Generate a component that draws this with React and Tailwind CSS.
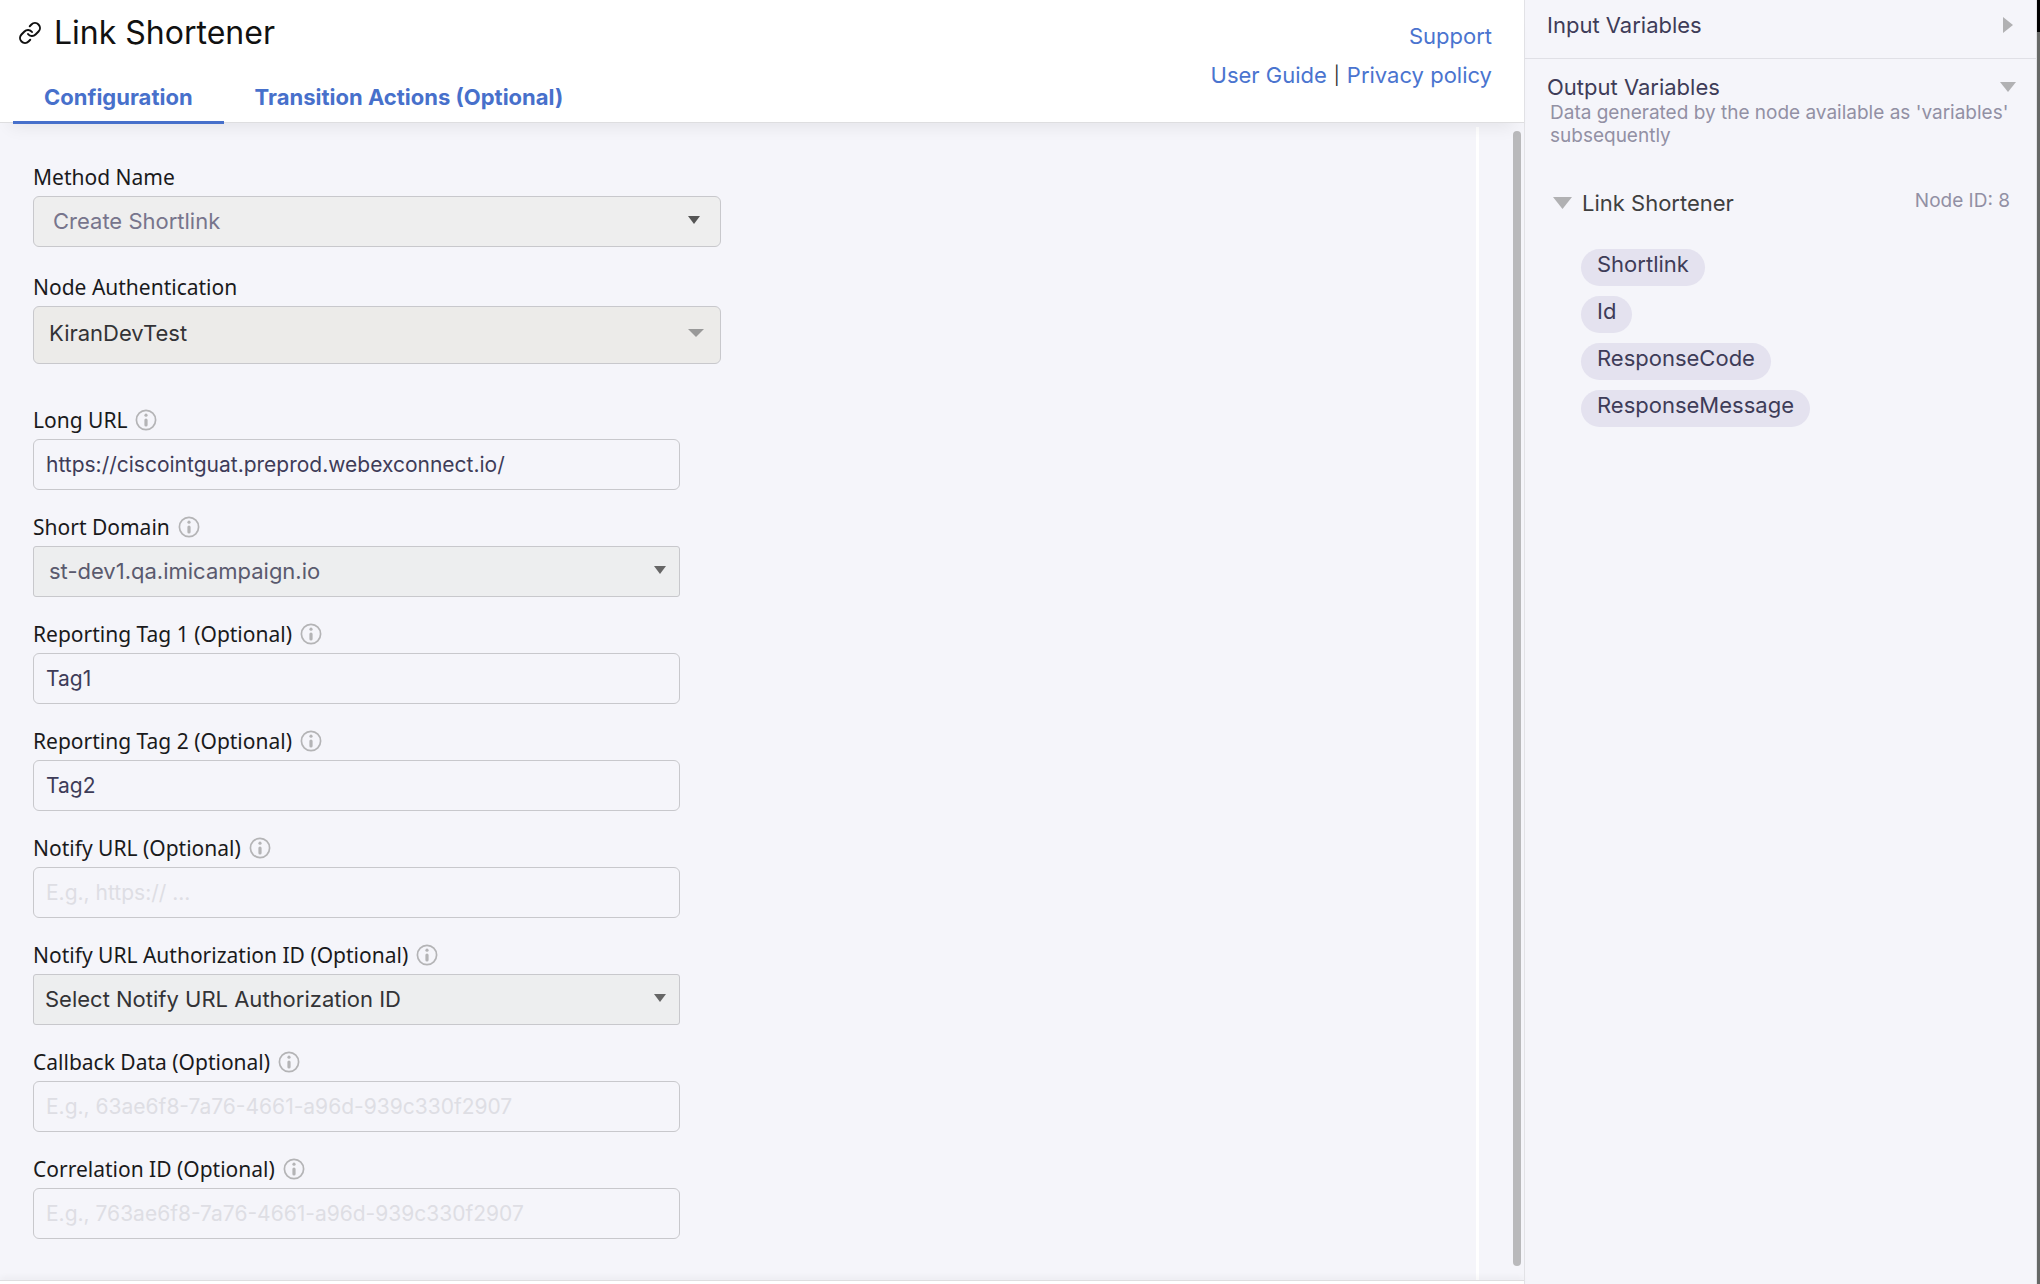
import { useState } from "react";
import { Link } from "lucide-react";

const fields = [
  { id: "longUrl", label: "Long URL", type: "text", value: "https://ciscointguat.preprod.webexconnect.io/" },
  { id: "shortDomain", label: "Short Domain", type: "select", value: "st-dev1.qa.imicampaign.io", style: "pl-[15px] text-[#5a5a6e]" },
  { id: "tag1", label: "Reporting Tag 1 (Optional)", type: "text", value: "Tag1" },
  { id: "tag2", label: "Reporting Tag 2 (Optional)", type: "text", value: "Tag2" },
  { id: "notifyUrl", label: "Notify URL (Optional)", type: "text", value: "", placeholder: "E.g., https:// ..." },
  { id: "notifyAuth", label: "Notify URL Authorization ID (Optional)", type: "select", value: "Select Notify URL Authorization ID", style: "pl-[11px] text-[#333336]" },
  { id: "callback", label: "Callback Data (Optional)", type: "text", value: "", placeholder: "E.g., 63ae6f8-7a76-4661-a96d-939c330f2907" },
  { id: "correlation", label: "Correlation ID (Optional)", type: "text", value: "", placeholder: "E.g., 763ae6f8-7a76-4661-a96d-939c330f2907" },
];

const outputs = ["Shortlink", "Id", "ResponseCode", "ResponseMessage"];

function InfoIcon() {
  return (
    <svg className="size-[22px] shrink-0" viewBox="0 0 22 22" fill="none" aria-hidden>
      <circle cx="11" cy="11" r="9.6" stroke="#b4b4b6" strokeWidth="1.7" />
      <circle cx="11" cy="6.2" r="1.6" fill="#b4b4b6" />
      <path d="M11 11V16" stroke="#b4b4b6" strokeWidth="3.2" strokeLinecap="round" />
    </svg>
  );
}

function Triangle({ className }) {
  return (
    <svg className={className} viewBox="0 0 16 10" preserveAspectRatio="none" fill="currentColor" aria-hidden>
      <path d="M0 0H16L8 10Z" />
    </svg>
  );
}

function SelectBox({ id, value, className, arrow }) {
  return (
    <div className="relative">
      <select id={id} className={`w-full appearance-none border border-[#c8c8cc] outline-none ${className}`}>
        <option>{value}</option>
      </select>
      <Triangle className={`pointer-events-none absolute ${arrow}`} />
    </div>
  );
}

function Field({ field }) {
  const [value, setValue] = useState(field.value);

  return (
    <div className="w-[647px] max-w-full">
      <div className="mb-1 flex h-[30px] items-center gap-2">
        <label htmlFor={field.id} className="font-['Noto_Sans',sans-serif] text-[21px] leading-[30px] text-[#1a1a1c]">{field.label}</label>
        <InfoIcon />
      </div>
      {field.type === "select" ? (
        <SelectBox
          id={field.id}
          value={field.value}
          className={`h-[51px] rounded-[3px] bg-[#edeeef] text-[22px] ${field.style}`}
          arrow="right-3.5 top-5 h-2 w-3 text-[#666]"
        />
      ) : (
        <input
          id={field.id}
          type="text"
          value={value}
          placeholder={field.placeholder}
          onChange={(e) => setValue(e.target.value)}
          className="block h-[51px] w-full rounded-md border border-[#c8c8cc] bg-transparent px-3 text-[21px] text-[#3e3c58] outline-none placeholder:text-[#dedee4]"
        />
      )}
    </div>
  );
}

export default function App() {
  return (
    <div className="flex min-h-screen bg-[#f5f5fa] font-['Inter',sans-serif]">
      <main className="flex min-w-0 flex-1 flex-col">
        {/* Header */}
        <header className="relative z-10 flex h-[123px] justify-between border-b border-[#dedee0] bg-white pl-[13px] pr-8 shadow-[0_14px_16px_-10px_rgba(0,0,0,0.07)]">
          <div className="flex flex-col justify-between">
            <h1 className="flex items-center gap-3 pl-[5px] pt-3 text-[32px] leading-[42px] text-[#111]">
              <Link className="size-6 shrink-0" strokeWidth={2} />
              Link Shortener
            </h1>
            <nav className="-mb-0.5 flex text-[22px] font-bold leading-7 text-[#4770cb]">
              <button type="button" className="border-b-[3px] border-[#4770cb] px-[31px] pb-2.5">Configuration</button>
              <button type="button" className="border-b-[3px] border-transparent px-[31px] pb-2.5">Transition Actions (Optional)</button>
            </nav>
          </div>
          <div className="flex flex-col items-end pt-[17px] text-[22px] leading-[39px] text-[#4a74cf]">
            <a href="#support">Support</a>
            <div className="flex gap-[7px]">
              <a href="#guide">User Guide</a>
              <span className="text-lg leading-[39px] text-[#333]">|</span>
              <a href="#privacy">Privacy policy</a>
            </div>
          </div>
        </header>

        <div className="flex flex-1">
          <form className="flex-1 pb-10 pl-[33px] pt-[39px]">
            <div className="w-[688px] max-w-full">
              <label htmlFor="method" className="mb-1 block font-['Noto_Sans',sans-serif] text-[21px] leading-[30px] text-[#1a1a1c]">Method Name</label>
              <SelectBox
                id="method"
                value="Create Shortlink"
                className="h-[51px] rounded-md bg-[#eeeeee] pl-[19px] text-[22px] text-[#77758c]"
                arrow="right-[21px] top-5 h-2 w-3 text-[#555]"
              />
              <label htmlFor="auth" className="mb-1 mt-[25px] block font-['Noto_Sans',sans-serif] text-[21px] leading-[30px] text-[#1a1a1c]">Node Authentication</label>
              <SelectBox
                id="auth"
                value="KiranDevTest"
                className="h-[58px] rounded-md bg-[#ecebe9] pb-1 pl-[15px] text-[22px] text-[#333336]"
                arrow="right-[17px] top-[23px] h-2 w-4 text-[#999]"
              />
            </div>
            <div className="mt-[41px] flex flex-col gap-[22px]">
              {fields.map((field) => (
                <Field key={field.id} field={field} />
              ))}
            </div>
          </form>
          <div className="mt-1 w-[3px] bg-white" />
          {/* Scrollbar */}
          <div className="flex w-[45px] justify-end pb-3.5 pr-[3px] pt-2">
            <div className="w-2 rounded-full bg-[#b9b9bb]" />
          </div>
        </div>
        <div className="h-1 border-t border-[#dedee0] bg-white shadow-[0_-2px_6px_rgba(0,0,0,0.06)]" />
      </main>

      <aside className="w-[513px] shrink-0 border-x border-[#e2e2e6] text-[22px] text-[#3e3c58]">
        <section className="flex h-[59px] items-center justify-between border-b border-[#e0e0e6] pb-2 pl-[22px] pr-[23px]">
          <h2>Input Variables</h2>
          <svg className="h-4 w-2.5 text-[#b1b1b3]" viewBox="0 0 10 16" fill="currentColor" aria-hidden>
            <path d="M0 0L10 8L0 16Z" />
          </svg>
        </section>
        <section className="pl-[22px] pr-5 pt-3.5">
          <div className="flex items-center justify-between leading-7">
            <h2>Output Variables</h2>
            <Triangle className="h-2.5 w-4 text-[#b1b1b3]" />
          </div>
          <p className="pl-[3px] text-[19px] leading-[23px] text-[#9290a4]">
            Data generated by the node available as 'variables' subsequently
          </p>
          <div className="mt-[41px] flex items-center pl-1.5 pr-1.5 leading-[30px]">
            <Triangle className="h-3 w-[19px] text-[#b1b1b3]" />
            <h3 className="ml-2.5 flex-1 text-[#3f3f3f]">Link Shortener</h3>
            <span className="pb-1 text-[19px] leading-[26px] text-[#9290a4]">Node ID: 8</span>
          </div>
          <ul className="mt-[31px] flex flex-col items-start gap-2.5 pl-[34px]">
            {outputs.map((name) => (
              <li key={name} className="h-[37px] rounded-full bg-[#e4e2ef] px-4 leading-[31px]">{name}</li>
            ))}
          </ul>
        </section>
      </aside>
      {/* edge of the page behind the dialog */}
      <div className="w-[3px] shrink-0 bg-[#666866]">
        <div className="h-8 bg-black" />
      </div>
    </div>
  );
}
